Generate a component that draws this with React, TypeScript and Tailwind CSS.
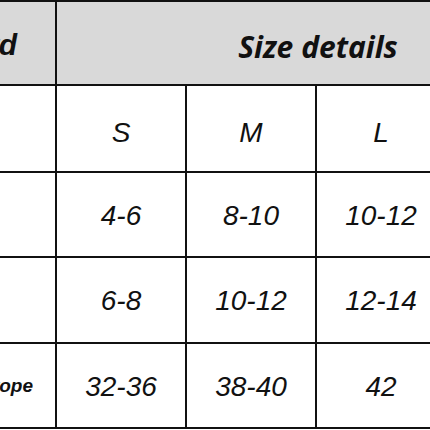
const sizes = ["S", "M", "L", ""];

const rows = [
  { label: "", values: ["4-6", "8-10", "10-12", ""] },
  { label: "", values: ["6-8", "10-12", "12-14", ""] },
  { label: "Europe", values: ["32-36", "38-40", "42", ""] },
];

const cell = "bg-white flex items-center justify-center";
const num = "font-['Liberation_Sans',Arial,sans-serif] italic text-[28px] text-[#111]";

export default function App() {
  return (
    <div className="w-[430px] h-[430px] overflow-hidden bg-white">
      <div className="grid grid-cols-[55px_128px_128px_128px_128px] grid-rows-[82px_85px_83px_84px_83px] gap-[2px] bg-[#111] pt-[2px] pb-[2px] w-max">
        {/* header */}
        <div className="bg-[#d9d9d9] flex items-center justify-end pr-[38px] pt-[3px]">
          <span className="font-['Liberation_Sans',Arial,sans-serif] font-bold italic text-[30px] text-[#111] whitespace-nowrap">
            Standard
          </span>
        </div>
        <div className="col-span-4 bg-[#d9d9d9] flex items-center justify-center pt-[6px]">
          <span className="font-['Open_Sans',sans-serif] font-bold italic text-[30px] text-[#111] pl-[4px]">
            Size details
          </span>
        </div>

        {/* size letters */}
        <div className={cell} />
        {sizes.map((s, j) => (
          <div key={j} className={cell + " pt-[8px]"}>
            <span className={num + " text-[27px]"}>{s}</span>
          </div>
        ))}

        {rows.map((r, i) => (
          <div key={i} className="contents">
            <div className="bg-white flex items-center justify-end pr-[22px] pt-[2px]">
              <span className="font-['Liberation_Sans',Arial,sans-serif] font-bold italic text-[19px] text-[#111] whitespace-nowrap">
                {r.label}
              </span>
            </div>
            {r.values.map((v, j) => (
              <div key={j} className={cell + " pt-[2px]"}>
                <span className={num}>{v}</span>
              </div>
            ))}
          </div>
        ))}
      </div>
    </div>
  );
}
